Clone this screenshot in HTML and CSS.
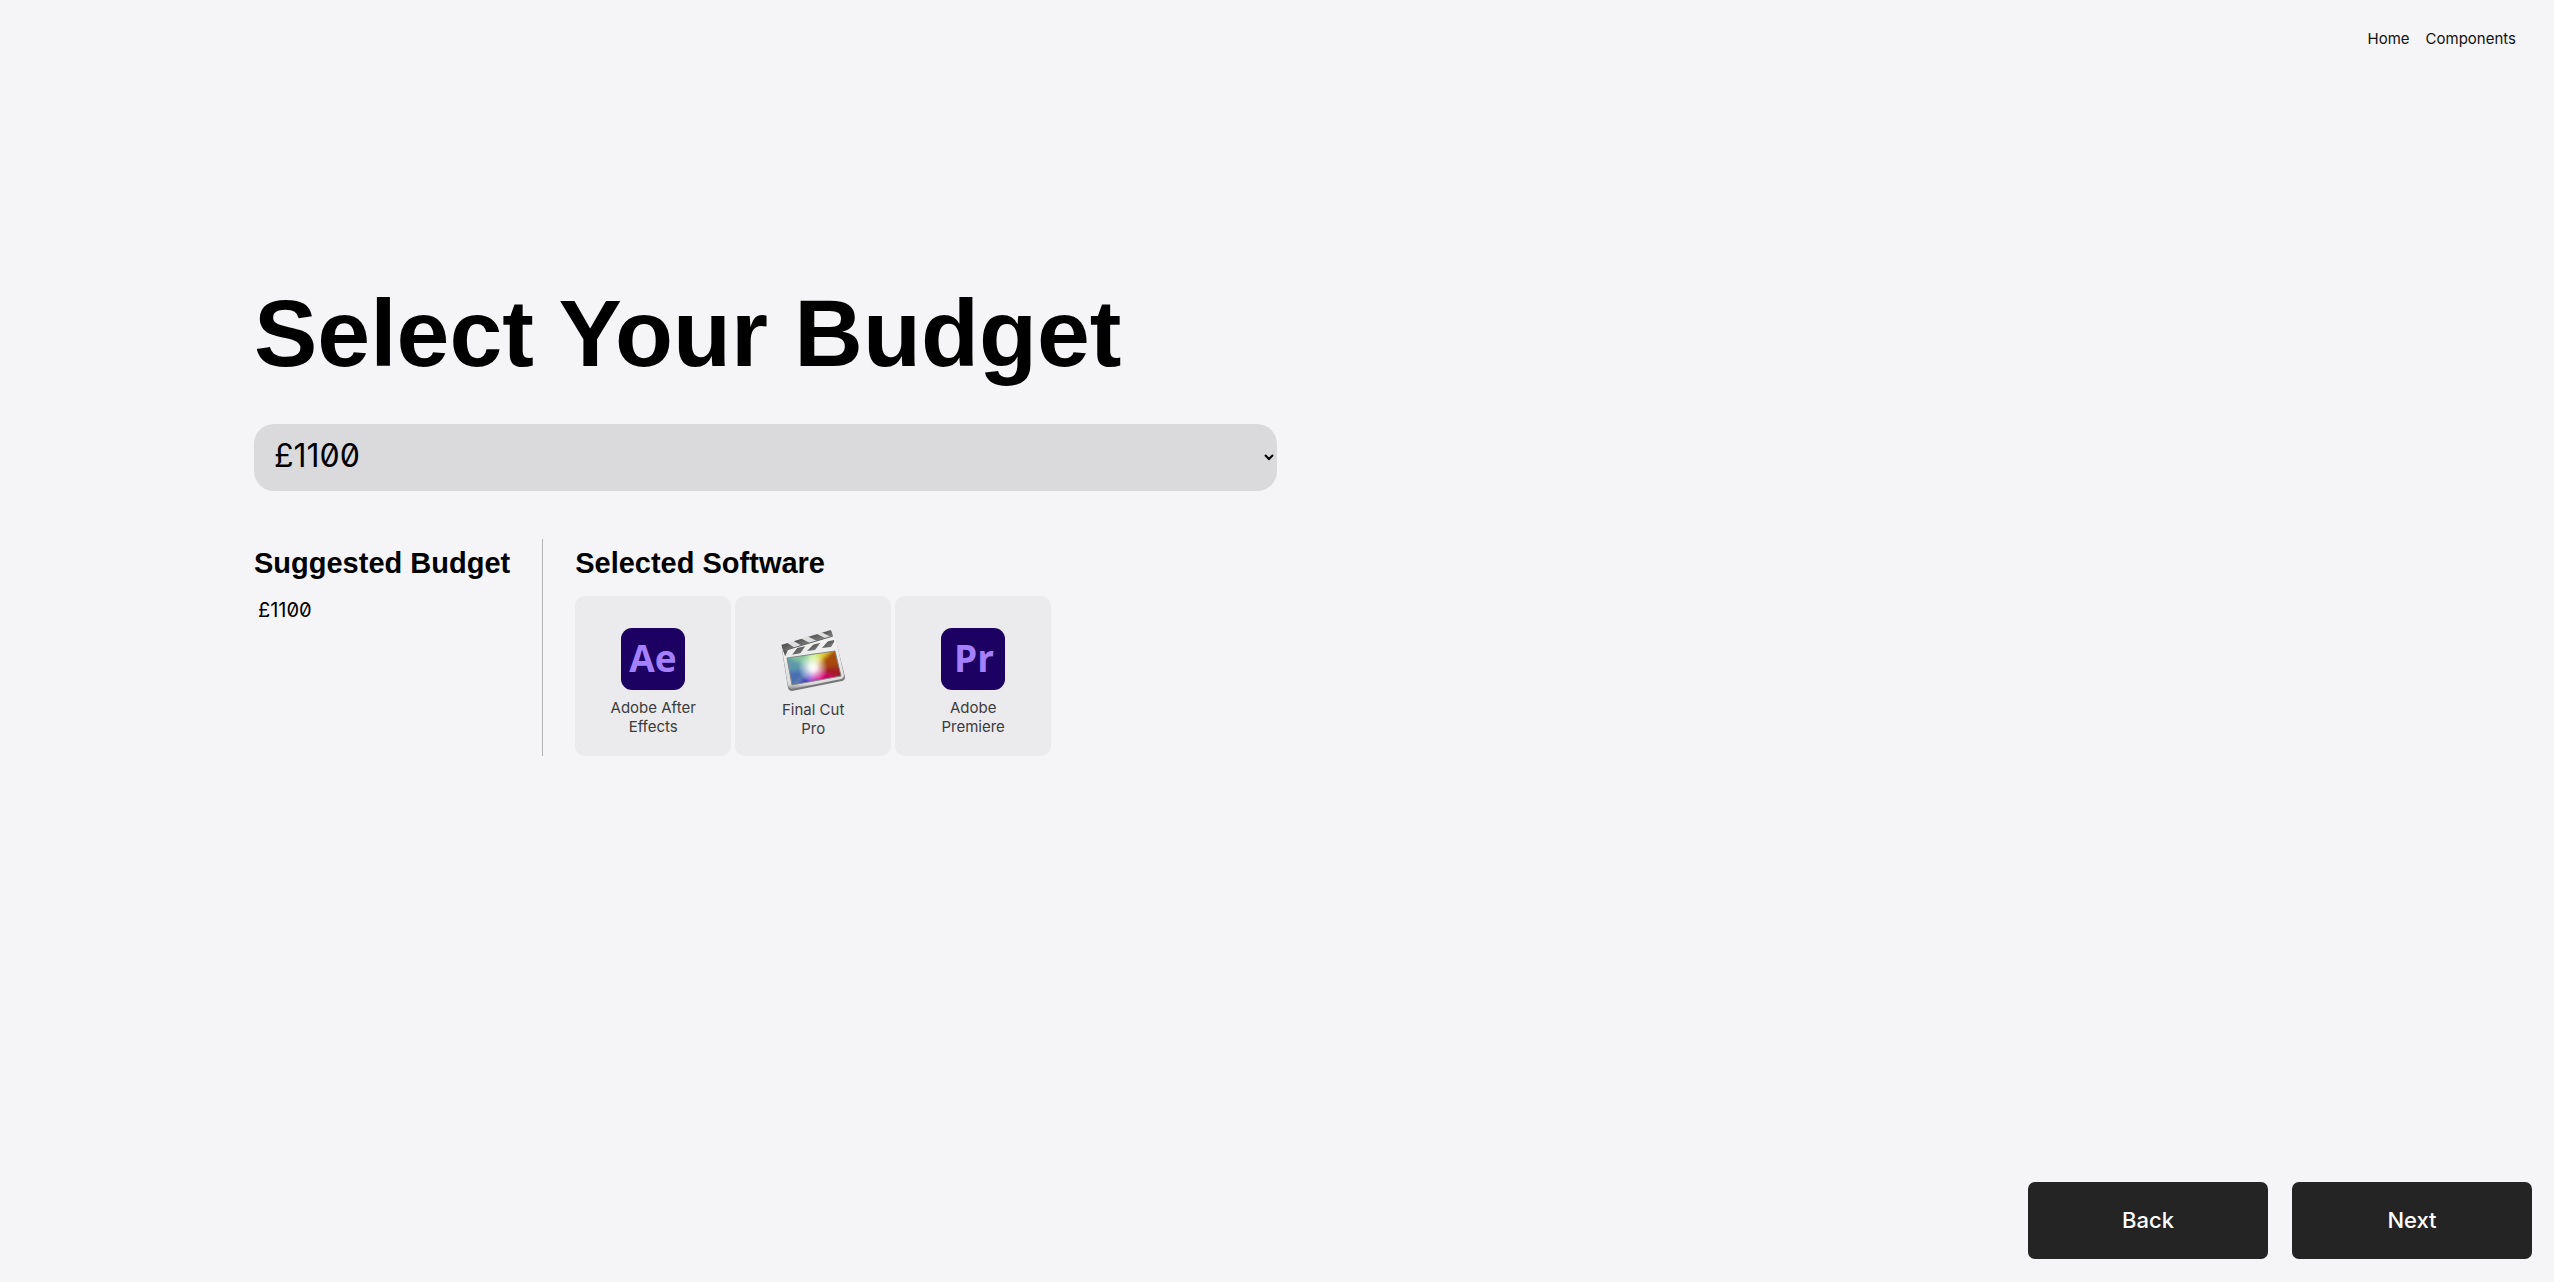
FILE: index.html
```html
<!DOCTYPE html>
<html lang="en">
<head>
<meta charset="utf-8">
<meta name="viewport" content="width=device-width, initial-scale=1">
<title>Select Your Budget</title>
<link rel="stylesheet" href="styles.css">
</head>
<body>
<header class="site-header">
  <nav class="nav">
    <a href="#home">Home</a>
    <a href="#components">Components</a>
  </nav>
</header>

<main class="content">
  <h1 class="title"><label for="budget">Select Your Budget</label></h1>
  <select class="budget-select" id="budget">
    <option>£1100</option>
  </select>

  <div class="summary">
    <section class="suggested">
      <h2 class="subtitle">Suggested Budget</h2>
      <p class="amount">£1100</p>
    </section>
    <section class="software">
      <h2 class="subtitle">Selected Software</h2>
      <ul class="cards">
        <li class="card">
          <svg class="icon" viewBox="0 0 64 62" aria-hidden="true">
            <rect width="64" height="62" rx="11" fill="#1c0062"/>
            <text class="glyph" x="32" y="44" text-anchor="middle">Ae</text>
          </svg>
          <span class="name">Adobe After Effects</span>
        </li>
        <li class="card">
          <svg class="icon icon-tall" viewBox="0 0 64 64" aria-hidden="true">
            <defs>
              <linearGradient id="frame" x1="0" y1="0" x2="0" y2="1">
                <stop offset="0" stop-color="#f4f4f4"/><stop offset=".9" stop-color="#dcdcdc"/><stop offset="1" stop-color="#8c8c8c"/>
              </linearGradient>
              <linearGradient id="stripe" x1="0" y1="0" x2="1" y2="1">
                <stop offset="0" stop-color="#3f3f3f"/><stop offset="1" stop-color="#8a8a8a"/>
              </linearGradient>
              <radialGradient id="glow">
                <stop offset="0" stop-color="#fff"/><stop offset=".25" stop-color="#fff" stop-opacity=".85"/><stop offset="1" stop-color="#fff" stop-opacity="0"/>
              </radialGradient>
              <filter id="soft" x="-30%" y="-30%" width="160%" height="160%"><feGaussianBlur stdDeviation="2"/></filter>
              <clipPath id="screen"><path d="M6 30 L54 23 L60 48 L11 57Z"/></clipPath>
              <clipPath id="arm"><path d="M0 17 L50 2 L52 8 L2 23Z"/></clipPath>
              <clipPath id="slate"><path d="M2 23 L53 12 L55 19 L4 28Z"/></clipPath>
            </defs>
            <path d="M1 22 L52 11 Q54 11 55 13 L64 49 Q64 52 61 53 L11 63 Q8 63 7 60Z" fill="#777"/>
            <path d="M1 21 L52 10 Q54 10 55 12 L63 47 Q63 50 60 51 L11 61 Q8 61 7 58Z" fill="url(#frame)"/>
            <path d="M0 17 L48 2 Q51 1 52 8 L2 23Z" fill="#dedede"/>
            <g clip-path="url(#arm)" fill="url(#stripe)">
              <path d="M0 15 L5 14 L14 20 L2 24Z"/><path d="M11 12 L19 10 L29 15 L21 18Z"/><path d="M26 8 L34 5 L44 10 L36 13Z"/><path d="M40 4 L48 1 L54 5 L50 9Z"/>
            </g>
            <path d="M2 23 L52 8" stroke="#626262" stroke-width="1"/>
            <g clip-path="url(#slate)" fill="url(#stripe)">
              <path d="M2 22 L7 22 L4 29Z"/><path d="M17 19 L25 17 L19 26 L11 27Z"/><path d="M33 16 L40 14 L34 22 L26 23Z"/><path d="M48 12 L55 11 L50 19 L41 20Z"/>
            </g>
            <g clip-path="url(#screen)">
              <path d="M4 20H62V60H4Z" fill="#7da38b"/>
              <g filter="url(#soft)">
                <path d="M32 40 L-6 22 L-6 52Z" fill="#5f98ac"/>
                <path d="M32 40 L-6 46 L0 68Z" fill="#496eb4"/>
                <path d="M32 40 L4 70 L34 70Z" fill="#443ed0"/>
                <path d="M32 40 L26 70 L54 66Z" fill="#b600b0"/>
                <path d="M32 40 L44 70 L70 54Z" fill="#d60070"/>
                <path d="M32 40 L70 56 L70 34Z" fill="#a31c20"/>
                <path d="M32 40 L70 38 L58 12Z" fill="#a84a08"/>
                <path d="M32 40 L58 16 L42 12Z" fill="#e7c930"/>
                <path d="M32 40 L46 12 L20 14Z" fill="#c5f07c"/>
                <path d="M32 40 L22 14 L-4 24Z" fill="#83c79c"/>
              </g>
              <circle cx="32" cy="40" r="15" fill="url(#glow)"/>
            </g>
            <path d="M6 30 L54 23 L60 48 L11 57Z" fill="none" stroke="#888" stroke-width="1"/>
          </svg>
          <span class="name">Final Cut Pro</span>
        </li>
        <li class="card">
          <svg class="icon" viewBox="0 0 64 62" aria-hidden="true">
            <rect width="64" height="62" rx="11" fill="#1c0062"/>
            <text class="glyph" x="33" y="44" text-anchor="middle">Pr</text>
          </svg>
          <span class="name">Adobe Premiere</span>
        </li>
      </ul>
    </section>
  </div>
</main>

<footer class="actions">
  <button class="button" type="button">Back</button>
  <button class="button" type="button">Next</button>
</footer>
</body>
</html>
```
FILE: styles.css
```css
* {
  box-sizing: border-box;
}

body {
  display: flex;
  flex-direction: column;
  min-height: 100vh;
  margin: 0;
  background: #f5f5f7;
  color: #000;
  font-family: Inter, sans-serif;
  font-feature-settings: "zero";
}

.site-header {
  padding: 29px 38px 0;
}

.nav {
  display: flex;
  justify-content: flex-end;
  gap: 16px;
  font-size: 15px;
  line-height: 20px;
}

.nav a {
  color: #111;
  text-decoration: none;
}

.content {
  flex: 1;
  padding: 229px 254px 40px;
}

.title {
  margin: 0 0 36px;
  font: bold 95px/110px "Liberation Sans", Arial, sans-serif;
}

.budget-select {
  display: block;
  width: 50%;
  height: 67px;
  padding: 0 0 4px 16px;
  border: 0;
  border-radius: 20px;
  background: #dadadc;
  color: #000;
  font-family: inherit;
  font-feature-settings: inherit;
  font-size: 32px;
}

.summary {
  display: flex;
  margin-top: 48px;
}

.suggested {
  padding-right: 32px;
  border-right: 1px solid #b4b4b4;
}

.software {
  padding-left: 32px;
}

.subtitle {
  margin: 8px 0 16px;
  font: bold 29px/33px "Liberation Sans", Arial, sans-serif;
}

.amount {
  margin: 0;
  padding-left: 4px;
  font-size: 20px;
  line-height: 28px;
}

.cards {
  display: flex;
  gap: 4px;
  margin: 0;
  padding: 0;
  list-style: none;
}

.card {
  display: flex;
  flex-direction: column;
  align-items: center;
  gap: 8px;
  width: 156px;
  height: 160px;
  padding: 32px 34px 0;
  border-radius: 10px;
  background: #ebebed;
}

.icon {
  flex: none;
  width: 64px;
  height: 62px;
}

.icon-tall {
  height: 64px;
}

.glyph {
  fill: #a480ff;
  font: 700 37px "Open Sans", sans-serif;
}

.name {
  color: #3b3b3d;
  font-size: 15px;
  line-height: 19px;
  text-align: center;
}

.actions {
  display: flex;
  justify-content: flex-end;
  gap: 24px;
  padding: 0 22px 23px;
}

.button {
  width: 240px;
  height: 77px;
  padding: 0 0 2px;
  border: 0;
  border-radius: 7px;
  background: #242424;
  color: #fff;
  font-family: inherit;
  font-size: 22px;
  font-weight: 500;
}
```
